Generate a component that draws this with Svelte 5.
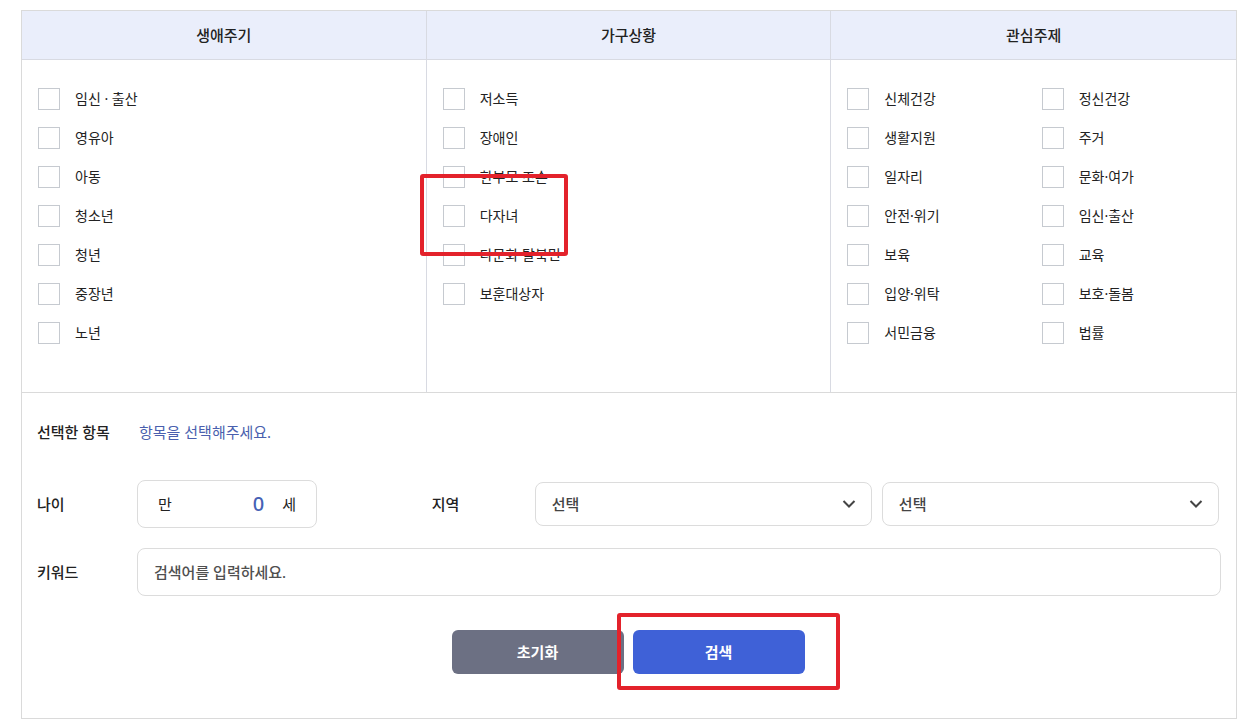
<script>
  const groups = [
    {
      id: 'life',
      title: '생애주기',
      items: ['임신 · 출산', '영유아', '아동', '청소년', '청년', '중장년', '노년'],
    },
    {
      id: 'family',
      title: '가구상황',
      items: ['저소득', '장애인', '한부모·조손', '다자녀', '다문화·탈북민', '보훈대상자'],
    },
    {
      id: 'topic',
      title: '관심주제',
      wide: true,
      items: [
        '신체건강', '정신건강',
        '생활지원', '주거',
        '일자리', '문화·여가',
        '안전·위기', '임신·출산',
        '보육', '교육',
        '입양·위탁', '보호·돌봄',
        '서민금융', '법률',
      ],
    },
  ]

  const marked = '다자녀'
  const regions = ['시도', '시군구']

  let selected = $state([])
  let age = $state('0')
  let keyword = $state('')

  function reset() {
    selected = []
    age = '0'
    keyword = ''
  }
</script>

<form class="panel" onsubmit={(e) => e.preventDefault()}>
  <div class="groups">
    {#each groups as group}
      <section class="group" role="group" aria-labelledby={`title-${group.id}`}>
        <h2 id={`title-${group.id}`}>{group.title}</h2>
        <div class="options" class:two={group.wide}>
          {#each group.items as item}
            <label class="option">
              <input type="checkbox" value={`${group.id}:${item}`} bind:group={selected} />
              <span>{item}</span>
              {#if item === marked}
                <i class="mark mark-option"></i>
              {/if}
            </label>
          {/each}
        </div>
      </section>
    {/each}
  </div>

  <div class="conditions">
    <div class="row">
      <span class="name">선택한 항목</span>
      <output class="chosen">
        {selected.length ? selected.map((s) => s.split(':')[1]).join(', ') : '항목을 선택해주세요.'}
      </output>
    </div>

    <div class="row split">
      <div class="field">
        <label class="name" for="age">나이</label>
        <div class="box age">
          <span>만</span>
          <input id="age" type="text" inputmode="numeric" bind:value={age} />
          <span>세</span>
        </div>
      </div>
      <div class="field region">
        <label class="name" for="region-0">지역</label>
        <div class="selects">
          {#each regions as region, i}
            <div class="select">
              <select id={`region-${i}`} aria-label={region}>
                <option>선택</option>
              </select>
              <svg width="14" height="10" viewBox="0 0 14 10" aria-hidden="true">
                <path d="M1.5 2 L7 7.5 L12.5 2" fill="none" stroke="#444" stroke-width="2" />
              </svg>
            </div>
          {/each}
        </div>
      </div>
    </div>

    <div class="row keyword">
      <label class="name" for="keyword">키워드</label>
      <input id="keyword" class="box" type="text" placeholder="검색어를 입력하세요." bind:value={keyword} />
    </div>

    <div class="buttons">
      <button type="button" class="reset" onclick={reset}>초기화</button>
      <button type="submit" class="search">
        검색
        <i class="mark mark-search"></i>
      </button>
    </div>
  </div>
</form>

<style>
  :global(body) {
    margin: 0;
    background: #fff;
  }

  .panel,
  .panel * {
    box-sizing: border-box;
  }

  .panel {
    margin: 10px 15px 9px 21px;
    border: 1px solid #dadada;
    color: #222;
    font-family: 'Noto Sans', 'Noto Sans CJK KR', sans-serif;
    font-size: 15px;
    line-height: 22px;
  }

  input,
  select,
  button {
    font: inherit;
  }

  .groups {
    display: grid;
    grid-template-columns: repeat(3, 1fr);
    border-bottom: 1px solid #dadada;
  }

  .group:not(:last-child) {
    border-right: 1px solid #d8dae2;
  }

  h2 {
    margin: 0;
    padding: 13px 0;
    border-bottom: 1px solid #d8dae2;
    background: #eaeefb;
    font-size: 15px;
    font-weight: 500;
    text-align: center;
  }

  .options {
    display: grid;
    gap: 17px 0;
    padding: 28px 0 48px 16px;
  }

  .two {
    grid-template-columns: 1fr 1fr;
  }

  .option {
    position: relative;
    display: flex;
    align-items: center;
    gap: 15px;
    height: 22px;
    font-size: 14px;
  }

  .option input {
    appearance: none;
    width: 22px;
    height: 22px;
    margin: 0;
    border: 1px solid #c6cad0;
    background: #fff;
  }

  .option input:checked {
    background: #3f61d7;
  }

  .conditions {
    padding: 15px 15px 44px;
  }

  .row,
  .field {
    display: flex;
    align-items: center;
    min-height: 48px;
  }

  .row + .row {
    margin-top: 24px;
  }

  .row.keyword {
    margin-top: 20px;
  }

  .name {
    flex: none;
    width: 100px;
    font-weight: 500;
  }

  .chosen {
    padding-left: 2px;
    color: #4a5fae;
  }

  .split {
    display: grid;
    grid-template-columns: 1fr 2fr;
  }

  .region {
    padding-right: 2px;
  }

  .region .name {
    width: 103px;
  }

  .box {
    height: 48px;
    border: 1px solid #dcdcdc;
    border-radius: 8px;
    background: #fff;
  }

  .age {
    display: flex;
    align-items: center;
    gap: 18px;
    width: 180px;
    padding: 0 20px;
  }

  .age input {
    flex: 1;
    min-width: 0;
    padding: 0;
    border: 0;
    outline: 0;
    color: #4561b5;
    font-size: 20px;
    font-weight: 500;
    text-align: right;
  }

  .selects {
    display: flex;
    flex: 1;
    gap: 10px;
  }

  .select {
    position: relative;
    flex: 1;
  }

  select {
    appearance: none;
    display: block;
    width: 100%;
    height: 44px;
    padding: 0 40px 0 16px;
    border: 1px solid #dcdcdc;
    border-radius: 8px;
    background: #fff;
    color: #444;
    font-weight: 500;
  }

  .select svg {
    position: absolute;
    top: 17px;
    right: 16px;
    pointer-events: none;
  }

  .keyword input {
    flex: 1;
    min-width: 0;
    padding: 0 16px;
    color: #222;
    font-weight: 500;
  }

  .keyword input::placeholder {
    color: #505050;
    opacity: 1;
  }

  .buttons {
    display: flex;
    justify-content: center;
    gap: 9px;
    margin-top: 34px;
    padding-right: 2px;
  }

  .buttons button {
    position: relative;
    width: 172px;
    height: 44px;
    padding: 0;
    border: 0;
    border-radius: 6px;
    color: #fff;
    font-weight: 700;
    cursor: pointer;
  }

  .buttons .reset {
    background: #6c7083;
  }

  .buttons .search {
    background: #3f61d7;
  }

  /* red callouts */
  .mark {
    position: absolute;
    z-index: 1;
    border: 4px solid #e3222b;
    border-radius: 3px;
    pointer-events: none;
  }

  .mark-option {
    top: -31px;
    left: -23px;
    width: 148px;
    height: 82px;
  }

  .mark-search {
    top: -17px;
    left: -16px;
    width: 223px;
    height: 77px;
  }
</style>
